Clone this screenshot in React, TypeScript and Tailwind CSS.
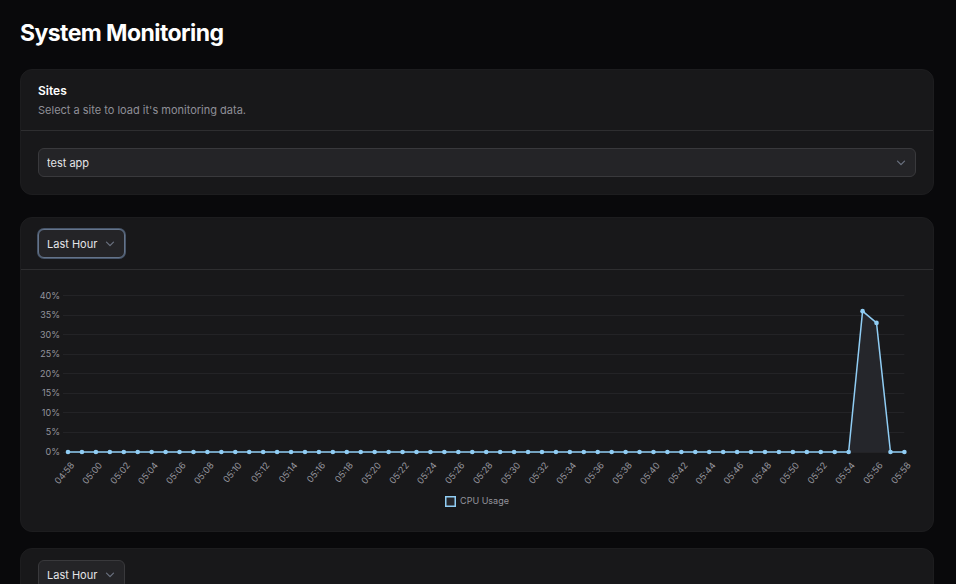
import type { ReactNode } from "react";

type SelectProps = {
  label: string;
  options: string[];
  active?: boolean;
  fullWidth?: boolean;
};

function Select({ label, options, active = false, fullWidth = false }: SelectProps) {
  return (
    <div className={fullWidth ? "relative w-full" : "relative w-[87px]"}>
      <select
        aria-label={label}
        className={
          "block h-[29px] w-full appearance-none rounded-md border bg-[#242427] pr-4 pl-2 text-[11px] leading-4 text-zinc-200 outline-none " +
          (active ? "border-[#64748b] ring-1 ring-[#475569]" : "border-[#39393c]")
        }
      >
        {options.map((option) => (
          <option key={option}>{option}</option>
        ))}
      </select>
      <svg
        viewBox="0 0 10 6"
        className="pointer-events-none absolute top-3 right-[10px] h-[6px] w-[10px]"
        fill="none"
        stroke="#6b7280"
        strokeWidth="1.2"
        strokeLinecap="round"
        strokeLinejoin="round"
        aria-hidden="true"
      >
        <path d="M1.5 1.2 5 4.7 8.5 1.2" />
      </svg>
    </div>
  );
}

const WIDTH = 878;
const LEFT = 30;
const STEP = 13.94;
const TOP = 8.5;
const BASE = 165;

const usage: number[] = Array.from({ length: 61 }, (_, i) => (i === 57 ? 36 : i === 58 ? 33 : 0));
const ticks = [40, 35, 30, 25, 20, 15, 10, 5, 0];

const xOf = (i: number) => LEFT + i * STEP;
const yOf = (value: number) => BASE - (value / 40) * (BASE - TOP);

function timeLabel(i: number) {
  const minutes = 4 * 60 + 58 + i;
  return `0${Math.floor(minutes / 60)}:${String(minutes % 60).padStart(2, "0")}`;
}

function UsageChart({ name }: { name: string }) {
  const points = usage.map((value, i) => `${xOf(i)},${yOf(value)}`).join(" ");
  return (
    <figure className="px-[17px] pt-[17px] pb-[22px]">
      <svg
        viewBox={`0 0 ${WIDTH} 204`}
        className="block w-full overflow-visible text-[9px]"
        role="img"
        aria-label={`${name} over the last hour`}
      >
        {ticks.map((tick) => (
          <g key={tick}>
            <line
              x1="25"
              x2={xOf(60)}
              y1={Math.floor(yOf(tick)) + 0.5}
              y2={Math.floor(yOf(tick)) + 0.5}
              stroke="#232326"
            />
            <text x="22" y={yOf(tick) + 3} textAnchor="end" fill="#94949c">
              {tick}%
            </text>
          </g>
        ))}
        <polygon points={`${xOf(0)},${BASE} ${points} ${xOf(60)},${BASE}`} fill="#25262b" />
        <polyline points={points} fill="none" stroke="#90cdf4" strokeWidth="1.5" strokeLinejoin="round" />
        {usage.map((value, i) => (
          <circle key={i} cx={xOf(i)} cy={yOf(value)} r="2.3" fill="#90cdf4" />
        ))}
        {usage.map((_, i) =>
          i % 2 === 0 ? (
            <text
              key={i}
              transform={`translate(${xOf(i) + 5} 177) rotate(-50)`}
              textAnchor="end"
              dominantBaseline="middle"
              fill="#94949c"
            >
              {timeLabel(i)}
            </text>
          ) : null,
        )}
      </svg>
      <figcaption className="mt-[2px] flex items-center justify-center gap-1 text-[9px] leading-4 text-[#94949c]">
        <svg viewBox="0 0 11 11" className="size-[11px]" aria-hidden="true">
          <rect x="0.75" y="0.75" width="9.5" height="9.5" fill="#25262b" stroke="#90cdf4" strokeWidth="1.5" />
        </svg>
        {name}
      </figcaption>
    </figure>
  );
}

type PeriodCardProps = { label: string; active?: boolean; children?: ReactNode };

function PeriodCard({ label, active = false, children }: PeriodCardProps) {
  return (
    <section className="rounded-xl border border-[#1d1d1f] bg-[#18181a]">
      <header className="border-b border-[#2e2e30] px-[17px] py-[11px]">
        <Select label={label} options={["Last Hour"]} active={active} />
      </header>
      {children}
    </section>
  );
}

export default function App() {
  return (
    <main className="h-screen overflow-hidden bg-[#09090b] pr-[22px] pl-5 font-['Inter',sans-serif] text-white">
      <h1 className="pt-[17px] text-[23px] leading-8 font-bold tracking-tight">System Monitoring</h1>

      <section className="mt-5 rounded-xl border border-[#1d1d1f] bg-[#18181a]">
        <header className="border-b border-[#2e2e30] px-[17px] pt-[11px] pb-3">
          <h2 className="text-[12px] leading-5 font-semibold">Sites</h2>
          <p className="mt-px text-[11px] leading-4 text-[#8f8f97]">
            Select a site to load it's monitoring data.
          </p>
        </header>
        <div className="p-[17px]">
          <Select label="Site" options={["test app"]} fullWidth />
        </div>
      </section>

      <div className="mt-[22px] flex flex-col gap-4">
        <PeriodCard label="CPU usage period" active>
          <UsageChart name="CPU Usage" />
        </PeriodCard>
        <PeriodCard label="Period" />
      </div>
    </main>
  );
}
